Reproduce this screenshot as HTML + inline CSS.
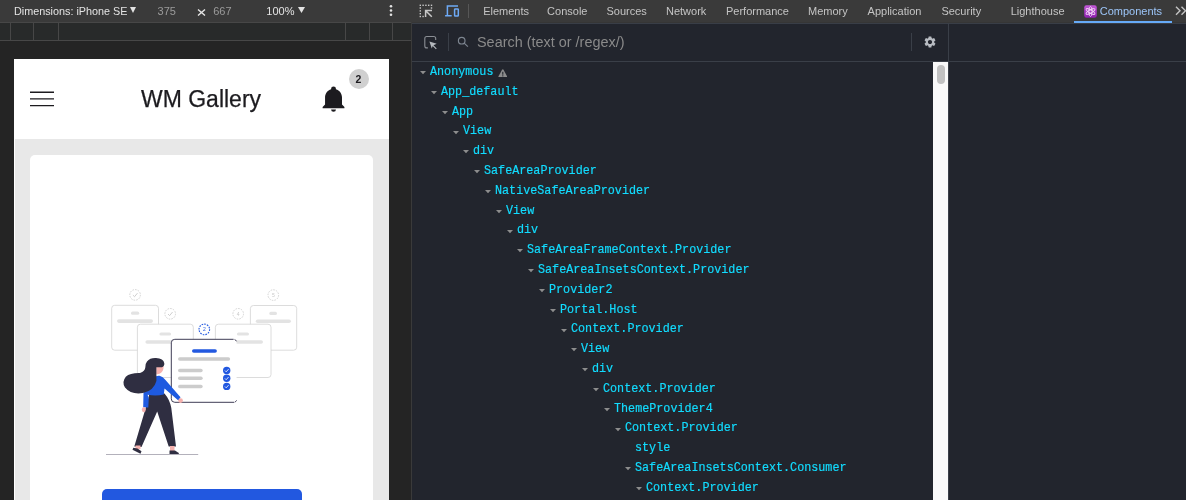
<!DOCTYPE html>
<html><head><meta charset="utf-8"><style>
*{margin:0;padding:0;box-sizing:border-box}
html,body{width:1186px;height:500px;overflow:hidden;background:#242424;font-family:"Liberation Sans",sans-serif}
.a{position:absolute}
.t{position:absolute;white-space:pre;transform-origin:0 0}
.tb{font-size:11px;line-height:14px;height:14px;color:#c4c4c4}
.sb{font-size:14px;line-height:16px;height:16px}
.wm{font-size:23.5px;line-height:28px;height:28px;-webkit-text-stroke:0.25px #1c1b1f}
.badge{font-size:10.5px;line-height:14px;font-weight:bold}
.row{position:absolute;height:14px;line-height:14px;font-family:"Liberation Mono",monospace;font-size:13px;color:#12dcff;white-space:pre;transform:scaleX(0.9038);-webkit-text-stroke:0.2px #12dcff}
</style></head><body><div id="root" style="position:absolute;left:0;top:0;width:1186px;height:500px;overflow:hidden;will-change:transform">
<div class="a" style="left:0px;top:0px;width:411px;height:22px;background:#3a3a3a;"></div>
<div class="a" style="left:0px;top:22px;width:411px;height:1px;background:#474747;"></div>
<div class="a" style="left:0px;top:23px;width:411px;height:17px;background:#282a2a;"></div>
<div class="a" style="left:0px;top:40px;width:411px;height:1px;background:#474747;"></div>
<div class="a" style="left:10px;top:23px;width:1px;height:17px;background:#474747;"></div>
<div class="a" style="left:33px;top:23px;width:1px;height:17px;background:#474747;"></div>
<div class="a" style="left:58px;top:23px;width:1px;height:17px;background:#474747;"></div>
<div class="a" style="left:345px;top:23px;width:1px;height:17px;background:#474747;"></div>
<div class="a" style="left:369px;top:23px;width:1px;height:17px;background:#474747;"></div>
<div class="a" style="left:392px;top:23px;width:1px;height:17px;background:#474747;"></div>
<div class="t tb" style="left:13.6px;top:4.4px;color:#e3e3e3;transform:scaleX(0.982);">Dimensions: iPhone SE</div>
<svg class="a" style="left:130px;top:7px" width="6" height="6"><path d="M0 0H6L3 6Z" fill="#e3e3e3"/></svg>
<div class="t tb" style="left:157.6px;top:4.4px;color:#9b9b9b;">375</div>
<svg class="a" style="left:197px;top:9px" width="9" height="7"><path d="M1 0.5L8 6.5M8 0.5L1 6.5" stroke="#e3e3e3" stroke-width="1.4"/></svg>
<div class="t tb" style="left:213.2px;top:4.4px;color:#9b9b9b;">667</div>
<div class="t tb" style="left:266.3px;top:4.4px;color:#e3e3e3;">100%</div>
<svg class="a" style="left:298px;top:7px" width="7" height="6"><path d="M0 0H7L3.5 6Z" fill="#e3e3e3"/></svg>
<svg class="a" style="left:389px;top:4px" width="4" height="14"><circle cx="2" cy="2.3" r="1.3" fill="#e3e3e3"/><circle cx="2" cy="6.5" r="1.3" fill="#e3e3e3"/><circle cx="2" cy="10.7" r="1.3" fill="#e3e3e3"/></svg>
<div class="a" style="left:14px;top:59px;width:375px;height:441px;background:#fff;overflow:hidden">
<div class="a" style="left:1px;top:80px;width:374px;height:361px;background:#e8e8e8;"></div>
<div class="a" style="left:16px;top:96px;width:343px;height:400px;background:#fff;border-radius:5px"></div>
</div>
<div class="a" style="left:411px;top:0px;width:1px;height:500px;background:#3a3a3a;"></div>
<div class="a" style="left:412px;top:0px;width:774px;height:22px;background:#3a3a3a;"></div>
<div class="a" style="left:412px;top:22px;width:774px;height:1px;background:#363636;"></div>
<div class="a" style="left:412px;top:23px;width:774px;height:477px;background:#22252d;"></div>
<div class="a" style="left:412px;top:23px;width:774px;height:1px;background:#393e47;"></div>
<div class="a" style="left:412px;top:61px;width:774px;height:1px;background:#3a3f48;"></div>
<div class="a" style="left:948px;top:23px;width:1px;height:477px;background:#3a3f48;"></div>
<div class="t tb" style="left:483.2px;top:4.4px;">Elements</div>
<div class="t tb" style="left:547.1px;top:4.4px;">Console</div>
<div class="t tb" style="left:606.5px;top:4.4px;">Sources</div>
<div class="t tb" style="left:666.0px;top:4.4px;">Network</div>
<div class="t tb" style="left:726.0px;top:4.4px;">Performance</div>
<div class="t tb" style="left:808.0px;top:4.4px;">Memory</div>
<div class="t tb" style="left:867.6px;top:4.4px;">Application</div>
<div class="t tb" style="left:941.4px;top:4.4px;">Security</div>
<div class="t tb" style="left:1010.7px;top:4.4px;">Lighthouse</div>
<div class="t tb" style="left:1099.7px;top:4.4px;color:#9cc5f8;">Components</div>
<div class="a" style="left:1074px;top:21px;width:98px;height:2px;background:#66aaf7;"></div>
<svg class="a" style="left:418px;top:3px" width="16" height="16" fill="#c8c8c8"><rect x="1.60" y="1.60" width="1.4" height="1.4"/><rect x="4.40" y="1.60" width="1.4" height="1.4"/><rect x="7.20" y="1.60" width="1.4" height="1.4"/><rect x="10.00" y="1.60" width="1.4" height="1.4"/><rect x="12.80" y="1.60" width="1.4" height="1.4"/><rect x="1.60" y="4.30" width="1.4" height="1.4"/><rect x="1.60" y="7.20" width="1.4" height="1.4"/><rect x="1.60" y="10.00" width="1.4" height="1.4"/><rect x="1.60" y="12.80" width="1.4" height="1.4"/><rect x="12.80" y="4.30" width="1.4" height="1.4"/><rect x="4.40" y="12.80" width="1.4" height="1.4"/><path d="M7.6 14V7.6H14M8.2 8.2L13.8 13.8" stroke="#c8c8c8" stroke-width="1.5" fill="none"/></svg>
<svg class="a" style="left:444px;top:4px" width="16" height="14" fill="none" stroke="#6eaaf5" stroke-width="1.5"><path d="M14 2.1H3.4V11.2M1.1 11.7H7.7"/><rect x="10.6" y="5" width="3.7" height="7.1" rx="0.6"/></svg>
<div class="a" style="left:468px;top:4px;width:1px;height:14px;background:#575757;"></div>
<svg class="a" style="left:1084px;top:5px" width="13" height="13"><defs><linearGradient id="pg" x1="0" y1="0" x2="0" y2="1"><stop offset="0" stop-color="#c35ad8"/><stop offset="1" stop-color="#8e1fae"/></linearGradient></defs><rect x="0.2" y="0.2" width="12.6" height="12.6" rx="2.2" fill="url(#pg)"/><g fill="none" stroke="#f3d6f7" stroke-width="0.9"><ellipse cx="6.5" cy="6.5" rx="1.6" ry="5"/><ellipse cx="6.5" cy="6.5" rx="1.6" ry="5" transform="rotate(60 6.5 6.5)"/><ellipse cx="6.5" cy="6.5" rx="1.6" ry="5" transform="rotate(-60 6.5 6.5)"/></g></svg>
<svg class="a" style="left:1174px;top:6px" width="12" height="10" fill="none" stroke="#c4c4c4" stroke-width="1.4"><path d="M2 0.8L6 4.8L2 8.8M7.5 0.8L11.5 4.8L7.5 8.8"/></svg>
<svg class="a" style="left:422px;top:34px" width="17" height="17" fill="none"><path d="M5.9 13.9H4.8Q2.8 13.9 2.8 11.9V4.5Q2.8 2.5 4.8 2.5H11.7Q13.7 2.5 13.7 4.5V5.9" stroke="#8a8e94" stroke-width="1.1"/><path d="M7.4 7.4L14.7 9.8L11.5 11.3L14.7 14.5L13.9 15.3L10.7 12.1L9.8 14.5Z" fill="#b4b8bd"/></svg>
<div class="a" style="left:448px;top:33px;width:1px;height:18px;background:#3a3f48;"></div>
<svg class="a" style="left:456px;top:35px" width="14" height="14" fill="none" stroke="#7d8590" stroke-width="1.15"><circle cx="5.7" cy="5.7" r="3.3"/><path d="M8.2 8.2L11.9 11.6"/></svg>
<div class="t sb" style="left:477.0px;top:34.2px;color:#8a8a8a;transform:scaleX(1.03);">Search (text or /regex/)</div>
<div class="a" style="left:911px;top:33px;width:1px;height:18px;background:#3a3f48;"></div>
<svg class="a" style="left:923px;top:35px" width="14" height="14" viewBox="0 0 24 24"><path fill="#b8bcc2" d="M19.14 12.94c.04-.3.06-.61.06-.94 0-.32-.02-.64-.07-.94l2.03-1.58a.49.49 0 0 0 .12-.61l-1.92-3.32a.49.49 0 0 0-.59-.22l-2.39.96c-.5-.38-1.03-.7-1.62-.94l-.36-2.54a.484.484 0 0 0-.48-.41h-3.84c-.24 0-.43.17-.47.41l-.36 2.54c-.59.24-1.13.57-1.62.94l-2.39-.96c-.22-.08-.47 0-.59.22L2.74 8.87c-.12.21-.08.47.12.61l2.03 1.58c-.05.3-.09.63-.09.94s.02.64.07.94l-2.03 1.58a.49.49 0 0 0-.12.61l1.92 3.32c.12.22.37.29.59.22l2.39-.96c.5.38 1.03.7 1.62.94l.36 2.54c.05.24.24.41.48.41h3.84c.24 0 .44-.17.47-.41l.36-2.54c.59-.24 1.13-.56 1.62-.94l2.39.96c.22.08.47 0 .59-.22l1.92-3.32c.12-.22.07-.47-.12-.61l-2.01-1.58zM12 15.6c-1.98 0-3.6-1.62-3.6-3.6s1.62-3.6 3.6-3.6 3.6 1.62 3.6 3.6-1.62 3.6-3.6 3.6z"/></svg>
<div class="a" style="left:933px;top:62px;width:15px;height:438px;background:#f9f9f9;"></div>
<div class="a" style="left:937px;top:65px;width:8px;height:19px;background:#c1c1c1;border-radius:4px"></div>
<div class="t row" style="left:430.1px;top:64.9px;">Anonymous</div>
<svg class="a" style="left:420.20px;top:71.20px" width="6" height="4"><path d="M0 0H6L3 3.2Z" fill="#8d8d8d"/></svg>
<div class="t row" style="left:440.9px;top:84.7px;">App_default</div>
<svg class="a" style="left:431.00px;top:91.00px" width="6" height="4"><path d="M0 0H6L3 3.2Z" fill="#8d8d8d"/></svg>
<div class="t row" style="left:451.7px;top:104.5px;">App</div>
<svg class="a" style="left:441.80px;top:110.80px" width="6" height="4"><path d="M0 0H6L3 3.2Z" fill="#8d8d8d"/></svg>
<div class="t row" style="left:462.5px;top:124.3px;">View</div>
<svg class="a" style="left:452.60px;top:130.60px" width="6" height="4"><path d="M0 0H6L3 3.2Z" fill="#8d8d8d"/></svg>
<div class="t row" style="left:473.3px;top:144.1px;">div</div>
<svg class="a" style="left:463.40px;top:150.40px" width="6" height="4"><path d="M0 0H6L3 3.2Z" fill="#8d8d8d"/></svg>
<div class="t row" style="left:484.1px;top:163.9px;">SafeAreaProvider</div>
<svg class="a" style="left:474.20px;top:170.20px" width="6" height="4"><path d="M0 0H6L3 3.2Z" fill="#8d8d8d"/></svg>
<div class="t row" style="left:494.9px;top:183.7px;">NativeSafeAreaProvider</div>
<svg class="a" style="left:485.00px;top:190.00px" width="6" height="4"><path d="M0 0H6L3 3.2Z" fill="#8d8d8d"/></svg>
<div class="t row" style="left:505.7px;top:203.5px;">View</div>
<svg class="a" style="left:495.80px;top:209.80px" width="6" height="4"><path d="M0 0H6L3 3.2Z" fill="#8d8d8d"/></svg>
<div class="t row" style="left:516.5px;top:223.3px;">div</div>
<svg class="a" style="left:506.60px;top:229.60px" width="6" height="4"><path d="M0 0H6L3 3.2Z" fill="#8d8d8d"/></svg>
<div class="t row" style="left:527.3px;top:243.1px;">SafeAreaFrameContext.Provider</div>
<svg class="a" style="left:517.40px;top:249.40px" width="6" height="4"><path d="M0 0H6L3 3.2Z" fill="#8d8d8d"/></svg>
<div class="t row" style="left:538.1px;top:262.9px;">SafeAreaInsetsContext.Provider</div>
<svg class="a" style="left:528.20px;top:269.20px" width="6" height="4"><path d="M0 0H6L3 3.2Z" fill="#8d8d8d"/></svg>
<div class="t row" style="left:548.9px;top:282.7px;">Provider2</div>
<svg class="a" style="left:539.00px;top:289.00px" width="6" height="4"><path d="M0 0H6L3 3.2Z" fill="#8d8d8d"/></svg>
<div class="t row" style="left:559.7px;top:302.5px;">Portal.Host</div>
<svg class="a" style="left:549.80px;top:308.80px" width="6" height="4"><path d="M0 0H6L3 3.2Z" fill="#8d8d8d"/></svg>
<div class="t row" style="left:570.5px;top:322.3px;">Context.Provider</div>
<svg class="a" style="left:560.60px;top:328.60px" width="6" height="4"><path d="M0 0H6L3 3.2Z" fill="#8d8d8d"/></svg>
<div class="t row" style="left:581.3px;top:342.1px;">View</div>
<svg class="a" style="left:571.40px;top:348.40px" width="6" height="4"><path d="M0 0H6L3 3.2Z" fill="#8d8d8d"/></svg>
<div class="t row" style="left:592.1px;top:361.9px;">div</div>
<svg class="a" style="left:582.20px;top:368.20px" width="6" height="4"><path d="M0 0H6L3 3.2Z" fill="#8d8d8d"/></svg>
<div class="t row" style="left:602.9px;top:381.7px;">Context.Provider</div>
<svg class="a" style="left:593.00px;top:388.00px" width="6" height="4"><path d="M0 0H6L3 3.2Z" fill="#8d8d8d"/></svg>
<div class="t row" style="left:613.7px;top:401.5px;">ThemeProvider4</div>
<svg class="a" style="left:603.80px;top:407.80px" width="6" height="4"><path d="M0 0H6L3 3.2Z" fill="#8d8d8d"/></svg>
<div class="t row" style="left:624.5px;top:421.3px;">Context.Provider</div>
<svg class="a" style="left:614.60px;top:427.60px" width="6" height="4"><path d="M0 0H6L3 3.2Z" fill="#8d8d8d"/></svg>
<div class="t row" style="left:635.3px;top:441.1px;">style</div>
<div class="t row" style="left:635.3px;top:460.9px;">SafeAreaInsetsContext.Consumer</div>
<svg class="a" style="left:625.40px;top:467.20px" width="6" height="4"><path d="M0 0H6L3 3.2Z" fill="#8d8d8d"/></svg>
<div class="t row" style="left:646.1px;top:480.7px;">Context.Provider</div>
<svg class="a" style="left:636.20px;top:487.00px" width="6" height="4"><path d="M0 0H6L3 3.2Z" fill="#8d8d8d"/></svg>
<svg class="a" style="left:497.5px;top:68.8px" width="9.6" height="8.6" viewBox="0 0 9.6 8.6"><path d="M4.8 0.3Q5.2 0.3 5.5 0.8L9.1 7.3Q9.4 8.3 8.5 8.3H1.1Q0.2 8.3 0.5 7.3L4.1 0.8Q4.4 0.3 4.8 0.3Z" fill="#8c8c8c"/><rect x="4.25" y="2.8" width="1.1" height="2.9" fill="#22252d"/><rect x="4.25" y="6.3" width="1.1" height="1.1" fill="#22252d"/></svg>
<svg class="a" style="left:30px;top:88px" width="24" height="20"><g stroke="#1c1b1f" stroke-width="1.4"><path d="M0 4.2H24M0 10.9H24M0 17.6H24"/></g></svg>
<div class="t wm" style="left:141.3px;top:85px;color:#1c1b1f;transform:scaleX(0.978);">WM Gallery</div>
<svg class="a" style="left:318.5px;top:83.8px" width="29.06" height="29.06" viewBox="0 0 24 24"><path fill="#1c1b1f" d="M21,19V20H3V19L5,17V11C5,7.9 7.03,5.17 10,4.29C10,4.19 10,4.1 10,4A2,2 0 0,1 12,2A2,2 0 0,1 14,4C14,4.1 14,4.19 14,4.29C16.97,5.17 19,7.9 19,11V17L21,19M14,21A2,2 0 0,1 12,23A2,2 0 0,1 10,21"/></svg>
<div class="a" style="left:349px;top:69px;width:20px;height:20px;border-radius:10px;background:#d0d0d0"></div>
<div class="t badge" style="left:355.6px;top:72px;color:#1c1b1f;">2</div>
<div class="a" style="left:102px;top:489px;width:200px;height:20px;background:#2258e0;border-radius:5px"></div>
<svg class="a" style="left:100px;top:280px" width="210" height="180" viewBox="100 280 210 180"><circle cx="135.1" cy="294.9" r="5.3" fill="none" stroke="#c9c9c9" stroke-width="0.8" stroke-dasharray="1.6 1.1"/><path d="M132.9 295.09999999999997L134.5 296.7L137.5 293.09999999999997" fill="none" stroke="#c9c9c9" stroke-width="0.9"/><circle cx="273.3" cy="295.1" r="5.3" fill="none" stroke="#c9c9c9" stroke-width="0.8" stroke-dasharray="1.6 1.1"/><text x="273.3" y="296.90000000000003" font-size="5" text-anchor="middle" fill="#c9c9c9" font-family="Liberation Sans">5</text><rect x="111.7" y="305.3" width="46.8" height="44.9" rx="3" fill="#fff" stroke="#d3d3d3" stroke-width="0.8"/><rect x="131" y="311.6" width="8.2" height="3.2" rx="1.6" fill="#e3e3e3"/><rect x="117" y="319.3" width="36" height="3.6" rx="1.8" fill="#e3e3e3"/><rect x="250.4" y="305.5" width="46.3" height="44.7" rx="3" fill="#fff" stroke="#d3d3d3" stroke-width="0.8"/><rect x="269.3" y="311.8" width="7.7" height="3.2" rx="1.6" fill="#e3e3e3"/><rect x="255.8" y="319.5" width="35.1" height="3.6" rx="1.8" fill="#e3e3e3"/><circle cx="170.2" cy="313.8" r="5.3" fill="none" stroke="#c9c9c9" stroke-width="0.8" stroke-dasharray="1.6 1.1"/><path d="M168.0 314.0L169.6 315.6L172.6 312.0" fill="none" stroke="#c9c9c9" stroke-width="0.9"/><circle cx="238.2" cy="313.8" r="5.3" fill="none" stroke="#c9c9c9" stroke-width="0.8" stroke-dasharray="1.6 1.1"/><text x="238.2" y="315.6" font-size="5" text-anchor="middle" fill="#c9c9c9" font-family="Liberation Sans">4</text><rect x="137.4" y="324.2" width="55.9" height="53.3" rx="3" fill="#fff" stroke="#d3d3d3" stroke-width="0.8"/><rect x="159.4" y="332.4" width="11.7" height="3.2" rx="1.6" fill="#e3e3e3"/><rect x="145.4" y="340.2" width="40" height="3.6" rx="1.8" fill="#e3e3e3"/><rect x="215.4" y="324.2" width="55.6" height="53.3" rx="3" fill="#fff" stroke="#d3d3d3" stroke-width="0.8"/><rect x="236.9" y="332.4" width="12.1" height="3.2" rx="1.6" fill="#e3e3e3"/><rect x="222" y="340.2" width="41" height="3.6" rx="1.8" fill="#e3e3e3"/><circle cx="204.3" cy="329.4" r="5.3" fill="none" stroke="#2258e0" stroke-width="1.1" stroke-dasharray="1.6 1.1"/><text x="204.3" y="331.2" font-size="5" text-anchor="middle" fill="#2258e0" font-family="Liberation Sans">2</text><rect x="171.3" y="339.3" width="65.3" height="63" rx="3.5" fill="#fff"/><path d="M233.6 339.3H174.8Q171.3 339.3 171.3 342.8V398.8Q171.3 402.3 174.8 402.3H234.2M234.6 339.5Q235.9 340 236.5 341.3M234.8 402.1Q236 401.6 236.6 400.4" fill="none" stroke="#3f3d56" stroke-width="1"/><rect x="192" y="349.2" width="24.9" height="3.5" rx="1.75" fill="#2258e0"/><rect x="178" y="357.2" width="52.1" height="3.5" rx="1.75" fill="#cccccc"/><rect x="178" y="368.65" width="24.7" height="3.5" rx="1.75" fill="#cccccc"/><circle cx="226.7" cy="370.4" r="3.7" fill="#2258e0"/><path d="M224.9 370.5L226.2 371.79999999999995L228.6 369.09999999999997" fill="none" stroke="#fff" stroke-width="0.8"/><rect x="178" y="376.55" width="24.7" height="3.5" rx="1.75" fill="#cccccc"/><circle cx="226.7" cy="378.3" r="3.7" fill="#2258e0"/><path d="M224.9 378.40000000000003L226.2 379.7L228.6 377.0" fill="none" stroke="#fff" stroke-width="0.8"/><rect x="178" y="384.65" width="24.7" height="3.5" rx="1.75" fill="#cccccc"/><circle cx="226.7" cy="386.4" r="3.7" fill="#2258e0"/><path d="M224.9 386.5L226.2 387.79999999999995L228.6 385.09999999999997" fill="none" stroke="#fff" stroke-width="0.8"/><path d="M149.5 393.5L164.5 393.5Q170 400 171.3 408L176 446.6L168.7 446.6L157.2 411.5L141.5 447L134.3 446.6L146 407Z" fill="#2f2e41"/><rect x="135.5" y="445.5" width="5" height="3.5" fill="#f5b1ae"/><rect x="170" y="446" width="4.5" height="5" fill="#f5b1ae"/><path d="M133.3 447.8L137.5 448.6L141.5 451.3L140.5 453.8L132.5 449.8Z" fill="#2f2e41"/><path d="M169.5 450.6L175 450.6L178.8 453.1L178.8 454.3L169.5 454.3Z" fill="#2f2e41"/><path d="M150 378.5Q155 375.5 159.5 375.8Q163 376.5 165.5 380L180.5 397.2L178.4 400.4L164.5 388.5L163.8 394.5Q156 396.5 147.6 394.8L148.8 398L148.3 407.4L143.2 407.2L143.5 393Z" fill="#1e5ae0"/><circle cx="180.6" cy="400.6" r="2.3" fill="#f5b1ae"/><ellipse cx="143.8" cy="409.6" rx="2" ry="2.6" fill="#f5b1ae"/><path d="M156.3 366.5L163.6 366.2Q163.8 371.5 159.5 373.8L157.5 374.2L156.3 374Z" fill="#f5b1ae"/><path d="M147 361.5Q150 357.8 156 358.1Q163.5 358.6 164.3 363.3Q164.6 366.3 161.8 367.3L156.4 367.3L156.4 381Q154 390.5 143 393.1Q131 395 125 387.5Q121.5 382 125.8 376.7Q130 372.8 140 373Q145 371 145.3 367.5Q145 364 147 361.5Z" fill="#2f2e41"/><rect x="106" y="454" width="92.2" height="1" fill="#b3b1bb"/></svg>
</div></body></html>
